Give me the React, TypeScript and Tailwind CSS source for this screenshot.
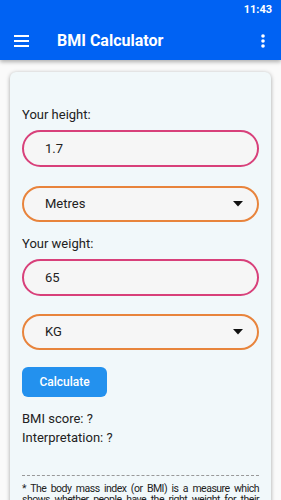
import React from "react";

function Field({ value, color }: { value: string; color: string }) {
  return (
    <div
      className={`h-[37px] rounded-full border-2 ${color} bg-[#f6f6f6] flex items-center pl-[21px] text-[13px] text-[#222]`}
    >
      {value}
    </div>
  );
}

function Select({ value }: { value: string }) {
  return (
    <div className="h-[36px] rounded-full border-2 border-[#e8843c] bg-[#f6f6f6] flex items-center pl-[21px] pr-[14px] text-[13px] text-[#222]">
      <span className="flex-1">{value}</span>
      <svg width="10" height="6" viewBox="0 0 10 6">
        <path d="M0 0 L10 0 L5 5.5 Z" fill="#111" />
      </svg>
    </div>
  );
}

export default function App() {
  return (
    <div
      className="w-[281px] h-[500px] overflow-hidden bg-[#fafafa] relative"
      style={{ fontFamily: "Roboto, 'Liberation Sans', sans-serif" }}
    >
      <div className="bg-[#0062f3] shadow-[0_2px_4px_rgba(0,0,0,0.3)] relative z-10">
        <div className="h-[21px] flex items-center justify-end pr-[9px] text-white text-[11px] font-bold">
          11:43
        </div>
        <div className="h-[39px] flex items-center">
          <svg width="15" height="12" viewBox="0 0 15 12" className="ml-[14px]">
            <rect x="0" y="0" width="15" height="2" fill="white" />
            <rect x="0" y="5" width="15" height="2" fill="white" />
            <rect x="0" y="10" width="15" height="2" fill="white" />
          </svg>
          <div className="ml-[28px] text-white text-[16px] font-bold">BMI Calculator</div>
          <div className="flex-1" />
          <svg width="4" height="14" viewBox="0 0 4 14" className="mr-[16px]">
            <circle cx="2" cy="2" r="1.8" fill="white" />
            <circle cx="2" cy="7" r="1.8" fill="white" />
            <circle cx="2" cy="12" r="1.8" fill="white" />
          </svg>
        </div>
      </div>
      <div className="mx-[10px] mt-[12px] rounded-[6px] bg-[#f1f8fa] shadow-[0_1px_4px_rgba(0,0,0,0.35)] px-[12px] pt-[34px] pb-[20px]">
        <div className="text-[13px] text-[#222] leading-[17px]">Your height:</div>
        <div className="mt-[7px]">
          <Field value="1.7" color="border-[#d8407a]" />
        </div>
        <div className="mt-[19px]">
          <Select value="Metres" />
        </div>
        <div className="mt-[13px] text-[13px] text-[#222] leading-[17px]">Your weight:</div>
        <div className="mt-[7px]">
          <Field value="65" color="border-[#d8407a]" />
        </div>
        <div className="mt-[18px]">
          <Select value="KG" />
        </div>
        <button className="mt-[17px] h-[30px] w-[85px] rounded-[6px] bg-[#2391ee] text-white text-[12px] font-medium flex items-center justify-center">
          Calculate
        </button>
        <div className="mt-[13px] text-[13px] text-[#222] leading-[17px]">BMI score: ?</div>
        <div className="mt-[2px] text-[13px] text-[#222] leading-[17px]">Interpretation: ?</div>
        <div className="mt-[29px] border-t border-dashed border-[#999]" />
        <div className="mt-[7px] text-[10.5px] tracking-[-0.5px] leading-[11px] text-[#222] text-justify">
          * The body mass index (or BMI) is a measure which shows whether people have the right weight for their height.
        </div>
      </div>
    </div>
  );
}
